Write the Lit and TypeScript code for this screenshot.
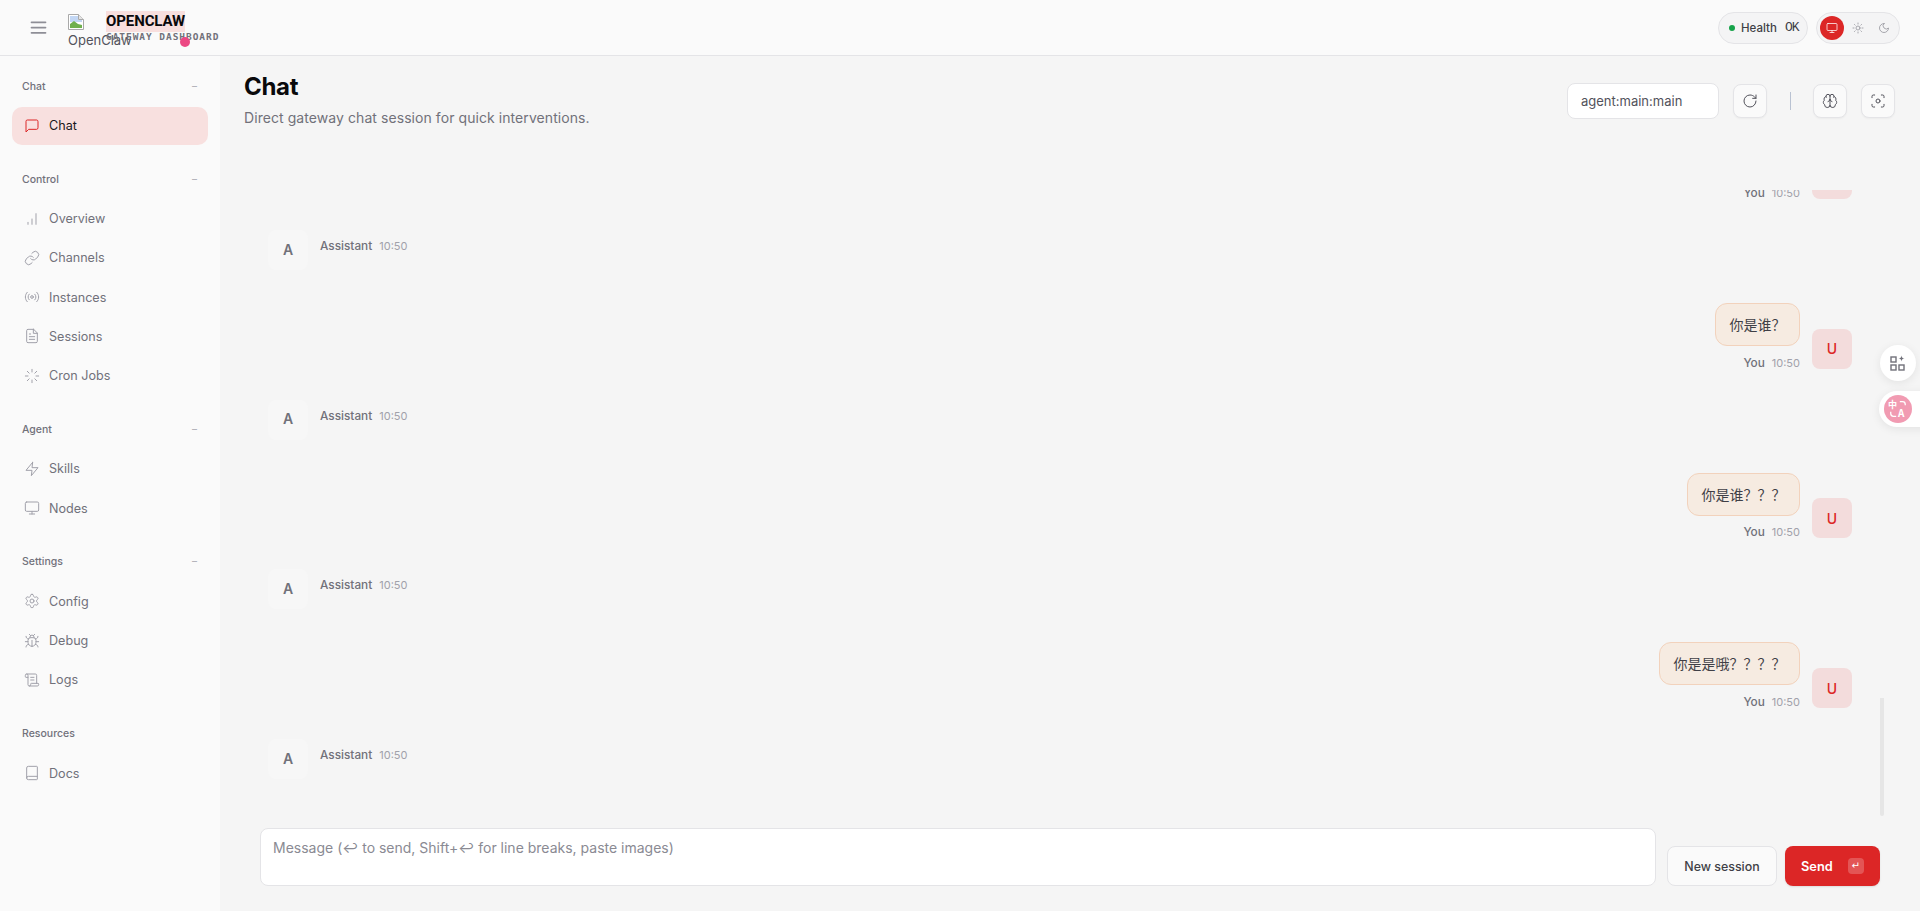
import { LitElement, html, css, svg, nothing } from "lit";
import { customElement } from "lit/decorators.js";

const I: Record<string, any> = {
  menu: svg`<path d="M4 6h16M4 12h16M4 18h16"/>`,
  chat: svg`<path d="M21 15a2 2 0 0 1-2 2H7l-4 4V5a2 2 0 0 1 2-2h14a2 2 0 0 1 2 2z"/>`,
  overview: svg`<path d="M6 20v-3M12 20v-8M18 20V4"/>`,
  link: svg`<path d="M10 13a5 5 0 0 0 7.54.54l3-3a5 5 0 0 0-7.07-7.07l-1.72 1.71"/><path d="M14 11a5 5 0 0 0-7.54-.54l-3 3a5 5 0 0 0 7.07 7.07l1.71-1.71"/>`,
  radio: svg`<path d="M4.9 19.1C1 15.2 1 8.8 4.9 4.9"/><path d="M7.8 16.2c-2.3-2.3-2.3-6.1 0-8.5"/><circle cx="12" cy="12" r="2"/><path d="M16.2 7.8c2.3 2.3 2.3 6.1 0 8.5"/><path d="M19.1 4.9C23 8.8 23 15.1 19.1 19"/>`,
  file: svg`<path d="M14.5 2H6a2 2 0 0 0-2 2v16a2 2 0 0 0 2 2h12a2 2 0 0 0 2-2V7.5L14.5 2z"/><path d="M14 2v6h6M16 13H8M16 17H8M10 9H8"/>`,
  loader: svg`<path d="M12 2v4M12 18v4M4.93 4.93l2.83 2.83M16.24 16.24l2.83 2.83M2 12h4M18 12h4M4.93 19.07l2.83-2.83M16.24 7.76l2.83-2.83"/>`,
  zap: svg`<polygon points="13 2 3 14 12 14 11 22 21 10 12 10 13 2"/>`,
  monitor: svg`<rect x="2" y="3" width="20" height="14" rx="2"/><path d="M8 21h8M12 17v4"/>`,
  gear: svg`<path d="M12.22 2h-.44a2 2 0 0 0-2 2v.18a2 2 0 0 1-1 1.73l-.43.25a2 2 0 0 1-2 0l-.15-.08a2 2 0 0 0-2.73.73l-.22.38a2 2 0 0 0 .73 2.73l.15.1a2 2 0 0 1 1 1.72v.51a2 2 0 0 1-1 1.74l-.15.09a2 2 0 0 0-.73 2.73l.22.38a2 2 0 0 0 2.73.73l.15-.08a2 2 0 0 1 2 0l.43.25a2 2 0 0 1 1 1.73V20a2 2 0 0 0 2 2h.44a2 2 0 0 0 2-2v-.18a2 2 0 0 1 1-1.73l.43-.25a2 2 0 0 1 2 0l.15.08a2 2 0 0 0 2.73-.73l.22-.39a2 2 0 0 0-.73-2.73l-.15-.08a2 2 0 0 1-1-1.74v-.5a2 2 0 0 1 1-1.74l.15-.09a2 2 0 0 0 .73-2.73l-.22-.38a2 2 0 0 0-2.73-.73l-.15.08a2 2 0 0 1-2 0l-.43-.25a2 2 0 0 1-1-1.73V4a2 2 0 0 0-2-2z"/><circle cx="12" cy="12" r="3"/>`,
  bug: svg`<path d="M8 2l1.88 1.88M14.12 3.88 16 2M9 7.13v-1a3 3 0 1 1 6 0v1"/><path d="M12 20c-3.3 0-6-2.7-6-6v-3a4 4 0 0 1 4-4h4a4 4 0 0 1 4 4v3c0 3.3-2.7 6-6 6"/><path d="M12 20v-9M6.53 9C4.6 8.8 3 7.1 3 5M6 13H2M3 21c0-2.1 1.7-3.9 3.8-4M20.97 5c0 2.1-1.6 3.8-3.5 4M22 13h-4M17.2 17c2.1.1 3.8 1.9 3.8 4"/>`,
  scroll: svg`<path d="M15 12h-5M15 8h-5M19 17V5a2 2 0 0 0-2-2H4"/><path d="M8 21h12a2 2 0 0 0 2-2v-1a1 1 0 0 0-1-1H11a1 1 0 0 0-1 1v1a2 2 0 1 1-4 0V5a2 2 0 1 0-4 0v2a1 1 0 0 0 1 1h3"/>`,
  book: svg`<path d="M4 19.5v-15A2.5 2.5 0 0 1 6.5 2H19a1 1 0 0 1 1 1v18a1 1 0 0 1-1 1H6.5a1 1 0 0 1 0-5H20"/>`,
  sun: svg`<circle cx="12" cy="12" r="4"/><path d="M12 2v2M12 20v2M4.93 4.93l1.41 1.41M17.66 17.66l1.41 1.41M2 12h2M20 12h2M6.34 17.66l-1.41 1.41M19.07 4.93l-1.41 1.41"/>`,
  moon: svg`<path d="M12 3a6 6 0 0 0 9 9 9 9 0 1 1-9-9Z"/>`,
  refresh: svg`<path d="M21 12a9 9 0 1 1-9-9c2.52 0 4.93 1 6.74 2.74L21 8"/><path d="M21 3v5h-5"/>`,
  brain: svg`<path d="M12 18V5"/><path d="M15 13a4.17 4.17 0 0 1-3-4 4.17 4.17 0 0 1-3 4"/><path d="M17.6 6.5A3 3 0 0 0 18 5a3 3 0 0 0-6 0 3 3 0 0 0-6 0 3 3 0 0 0 .4 1.5"/><path d="M18 5.1a4 4 0 0 1 2.5 5.8 4 4 0 0 1-.5 6.6A4 4 0 0 1 12 18a4 4 0 0 1-8-.5 4 4 0 0 1-.5-6.6A4 4 0 0 1 6 5.1"/>`,
  focus: svg`<path d="M3 7V5a2 2 0 0 1 2-2h2M17 3h2a2 2 0 0 1 2 2v2M21 17v2a2 2 0 0 1-2 2h-2M7 21H5a2 2 0 0 1-2-2v-2"/><circle cx="12" cy="12" r="3"/>`,
};

const icon = (n: string, cls = "") =>
  html`<svg class="ic ${cls}" viewBox="0 0 24 24" fill="none" stroke="currentColor" stroke-linecap="round" stroke-linejoin="round">${I[n]}</svg>`;

const NAV = [
  { label: "Chat", dash: true, items: [["Chat", "chat", true]] },
  { label: "Control", dash: true, items: [["Overview", "overview"], ["Channels", "link"], ["Instances", "radio"], ["Sessions", "file"], ["Cron Jobs", "loader"]] },
  { label: "Agent", dash: true, items: [["Skills", "zap"], ["Nodes", "monitor"]] },
  { label: "Settings", dash: true, items: [["Config", "gear"], ["Debug", "bug"], ["Logs", "scroll"]] },
  { label: "Resources", dash: false, items: [["Docs", "book"]] },
];

const THREAD = ["你是谁", "你是谁？", "你是谁？？？", "你是是哦？？？？"];

@customElement("app-root")
export class AppRoot extends LitElement {
  static styles = css`
    :host {
      display: block;
      height: 100vh;
      overflow: hidden;
      position: relative;
      font-family: Inter, "Noto Sans CJK SC", sans-serif;
      font-size: 13px;
      color: #3f3f46;
      background: #f5f5f5;
    }
    * { box-sizing: border-box; }
    .ic { width: 16px; height: 16px; stroke-width: 1.5; flex: none; display: block; }

    .topbar {
      height: 56px;
      background: #fafafa;
      border-bottom: 1px solid #e4e4e7;
      display: flex;
      align-items: center;
      padding: 0 20px 0 27.5px;
    }
    .burger { color: #8e8e96; width: 21px; height: 21px; stroke-width: 2; }
    .logo { width: 28px; margin: 14px 10px 0 19.5px; height: 42px; font-size: 13px; color: #52525b; align-self: flex-start; white-space: nowrap; }
    .logo svg { display: block; width: 16px; height: 16px; }
    .logo span { display: block; line-height: 18px; margin-top: 1px; }
    .brand { position: relative; align-self: flex-start; margin-top: 11px; }
    .brand b {
      display: block; width: 79px; height: 21px; background: #f8dfde; color: #09090b;
      font: 700 15px/21px "Roboto", sans-serif; letter-spacing: -0.1px; white-space: nowrap;
    }
    .brand small {
      display: block; font: 700 9.5px/10px "DejaVu Sans Mono", monospace; letter-spacing: .95px; color: #71717a;
      white-space: nowrap; margin-top: 0;
    }
    .dot { position: absolute; left: 74px; top: 26px; width: 10px; height: 10px; border-radius: 50%; background: #ec4883; }
    .spacer { flex: 1; }
    .pill { height: 32px; border: 1px solid #e4e4e7; border-radius: 16px; background: #f4f4f5; display: flex; align-items: center; }
    .health { width: 90px; padding-left: 10px; gap: 6px; font-size: 11.5px; font-weight: 500; color: #3f3f46; }
    .health i { width: 6px; height: 6px; border-radius: 50%; background: #16a34a; margin-right: 0; }
    .health code { font: 13px "Liberation Mono", monospace; margin-left: 2px; letter-spacing: -.9px; }
    .themes { width: 84px; margin-left: 8px; padding-left: 3px; gap: 2px; color: #8e8e96; }
    .themes span { width: 24px; height: 24px; border-radius: 50%; display: grid; place-items: center; }
    .themes .ic { width: 12px; height: 12px; }
    .themes .on { background: #dc2626; color: #fff; }

    .body { display: flex; height: calc(100% - 56px); }
    nav { width: 220px; flex: none; background: #fafafa; padding: 16px 12px 0; display: flex; flex-direction: column; gap: 20.7px; }
    .glabel { height: 28px; padding: 0 10px; display: flex; justify-content: space-between; align-items: center; font-size: 10.5px; font-weight: 500; color: #71717a; margin-bottom: 6.5px; }
    .glabel em { font-style: normal; color: #b4b4bb; margin-right: 0; }
    .items { display: flex; flex-direction: column; gap: 1.25px; }
    .item { height: 38px; display: flex; align-items: center; gap: 9px; padding-left: 12px; border-radius: 10px; color: #71717a; font-size: 12.6px; font-weight: 400; }
    .item .ic { color: #a1a1aa; }
    .item.on { background: #f8e0df; color: #18181b; }
    .item.on .ic { color: #dc2626; }

    main { flex: 1; min-width: 0; display: flex; flex-direction: column; position: relative; }
    .head { height: 134px; flex: none; padding: 27px 25px 0 24px; display: flex; align-items: flex-start; }
    .titles { flex: 1; padding-top: 0; margin-top: -12px; }
    h1 { margin: 0; font: 700 24px/32px Inter, sans-serif; letter-spacing: -.3px; color: #09090b; }
    .titles p { margin: 5px 0 0; font-size: 14px; line-height: 20px; color: #71717a; letter-spacing: .07px; }
    .session { width: 152px; height: 36px; background: #fff; border: 1px solid #e4e4e7; border-radius: 8px; padding-left: 13px; display: flex; align-items: center; color: #52525b; font-size: 13px; }
    .btn { width: 34px; height: 34px; background: #fafafa; border: 1px solid #e4e4e7; border-radius: 8px; display: grid; place-items: center; color: #52525b; margin: 1px 0 0 14px; box-shadow: 0 1px 2px rgba(0,0,0,.04); }
    .sep { width: 1px; height: 18px; background: #b9c2d2; margin: 9px 8px 0 23px; }
    .thread { height: 0; flex: 1; overflow: hidden; display: flex; flex-direction: column; justify-content: flex-end; gap: 32px; padding: 0 68px 0 48px; }
    .thread .tail { flex: none; height: 4px; }
    .row { display: flex; gap: 12px; align-items: flex-start; flex: none; }
    .row.user { justify-content: flex-end; margin: 1px 0 -1px; }
    .av { width: 40px; height: 40px; border-radius: 8px; display: grid; place-items: center; font-size: 14px; font-weight: 600; flex: none; }
    .assistant .av { background: #f7f7f7; color: #71717a; padding-bottom: 2px; }
    .user .av { background: #f3dcdc; color: #dc2626; margin-top: 25.67px; font-weight: 500; }
    .col { display: flex; flex-direction: column; align-items: flex-end; }
    .bubble { padding: 10px 13.5px; height: 43px; line-height: 21px; font-size: 14px; background: #f6ebe1; border: 1px solid #f2d2bc; border-radius: 12px; color: #3f3f46; white-space: nowrap; }
    .meta { line-height: 12px; display: flex; gap: 7px; color: #71717a; }
    .meta span { font-size: 11.8px; font-weight: 500; }
    .user .meta { margin-top: 10.67px; }
    .assistant .meta { margin-top: 10px; }
    .meta time { color: #a1a1aa; font-size: 11px; }

    .compose { height: 96px; flex: none; padding: 13px 40px 0 40px; display: flex; gap: 11px; align-items: flex-start; }
    textarea { flex: 1; height: 58px; border: 1px solid #e4e4e7; border-radius: 8px; background: #fff; padding: 9px 12px; font: 14px/20px Inter, sans-serif; resize: none; outline: none; }
    textarea::placeholder { color: #8a8a93; opacity: 1; }
    .actions { display: flex; gap: 8px; margin-top: 18px; }
    .ns { width: 110px; height: 40px; border: 1px solid #e4e4e7; border-radius: 8px; background: #fafafa; display: grid; place-items: center; font-size: 12.4px; font-weight: 500; color: #3f3f46; }
    .send { width: 95px; height: 40px; border-radius: 8px; background: #dc2626; color: #fff; display: flex; align-items: center; padding-left: 16px; font-size: 12.8px; font-weight: 600; box-shadow: 0 1px 2px rgba(0,0,0,.1); }
    .send kbd { margin-left: 15px; width: 16px; height: 16px; border-radius: 4px; background: rgba(255,255,255,.22); font: 10px/16px "DejaVu Sans", sans-serif; text-align: center; color: #fff; }

    .thumb { position: absolute; right: 36px; top: 698px; width: 4px; height: 118px; background: #e6e6e6; border-radius: 0 0 2px 2px; }
    .float-a { position: absolute; left: 1880px; top: 345px; width: 36px; height: 36px; border-radius: 50%; background: #fff; box-shadow: 0 2px 10px rgba(0,0,0,.08); display: grid; place-items: center; color: #71717a; }
    .float-a svg { width: 18px; height: 18px; }
    .float-b { position: absolute; left: 1879px; top: 391px; width: 60px; height: 36px; border-radius: 18px 0 0 18px; background: #fff; box-shadow: 0 2px 10px rgba(0,0,0,.08); padding: 4px 0 0 5px; }
    .float-b div { width: 28px; height: 28px; border-radius: 50%; background: #f19bb2; display: grid; place-items: center; }
    .float-b svg { width: 20px; height: 20px; display: block; }
    .float-b text { font-family: "Noto Sans CJK SC", sans-serif; font-weight: 700; fill: #fff; }
  `;

  render() {
    return html`
      <div class="topbar">
        ${icon("menu", "burger")}
        <div class="logo">
          <svg viewBox="0 0 16 16"><path d="M.5.5h10l5 5v10H.5z" fill="#fff" stroke="#a9a9a9"/><path d="M10.5.5v5h5" fill="#e4e4e4" stroke="#a9a9a9"/><path d="M2 2h8v4h4v2H2z" fill="#c3d7f4"/><path d="M2 14V10l4-3 4 3 4 1v3z" fill="#6fb04d"/></svg>
          <span>OpenClaw</span>
        </div>
        <div class="brand">
          <b>OPENCLAW</b>
          <small>GATEWAY DASHBOARD</small>
          <div class="dot"></div>
        </div>
        <div class="spacer"></div>
        <div class="pill health"><i></i>Health<code>OK</code></div>
        <div class="pill themes">
          <span class="on">${icon("monitor")}</span>
          <span>${icon("sun")}</span>
          <span>${icon("moon")}</span>
        </div>
      </div>
      <div class="body">
        <nav>
          ${NAV.map((g) => html`
            <section>
              <div class="glabel">${g.label}${g.dash ? html`<em>−</em>` : nothing}</div>
              <div class="items">
                ${g.items.map((it) => html`<div class="item ${it[2] ? "on" : ""}">${icon(it[1] as string)}${it[0]}</div>`)}
              </div>
            </section>`)}
        </nav>
        <main>
          <div class="head">
            <div class="titles">
              <h1>Chat</h1>
              <p>Direct gateway chat session for quick interventions.</p>
            </div>
            <div class="session">agent:main:main</div>
            <div class="btn">${icon("refresh")}</div>
            <div class="sep"></div>
            <div class="btn">${icon("brain")}</div>
            <div class="btn">${icon("focus")}</div>
          </div>
          <div class="thread">
            ${THREAD.map((t) => html`
              <div class="row user">
                <div class="col">
                  <div class="bubble">${t}</div>
                  <div class="meta"><span>You</span><time>10:50</time></div>
                </div>
                <div class="av">U</div>
              </div>
              <div class="row assistant">
                <div class="av">A</div>
                <div class="meta"><span>Assistant</span><time>10:50</time></div>
              </div>`)}
            <div class="tail"></div>
          </div>
          <div class="compose">
            <textarea placeholder="Message (↩ to send, Shift+↩ for line breaks, paste images)"></textarea>
            <div class="actions">
              <div class="ns">New session</div>
              <div class="send">Send<kbd>↵</kbd></div>
            </div>
          </div>
        </main>
      </div>
      <div class="thumb"></div>
      <div class="float-a">
        <svg viewBox="0 0 18 18" fill="none" stroke="currentColor" stroke-width="1.4"><rect x="2" y="3" width="5" height="5"/><rect x="2" y="11" width="5" height="5"/><rect x="10" y="11" width="5" height="5"/><path d="M12.5 1.5c.3 2 1 2.7 3 3-2 .3-2.7 1-3 3-.3-2-1-2.700-3-3 2-.3 2.700-1 3-3z" fill="currentColor" stroke="none"/></svg>
      </div>
      <div class="float-b">
        <div>
          <svg viewBox="0 0 22 22"><text x="0" y="10" font-size="10">中</text><text x="11" y="20" font-size="11">A</text><path d="M13 3h3a3 3 0 0 1 3 3v1M3 14v2a3 3 0 0 0 3 3h3" fill="none" stroke="#fff" stroke-width="1.400"/></svg>
        </div>
      </div>
    `;
  }
}
